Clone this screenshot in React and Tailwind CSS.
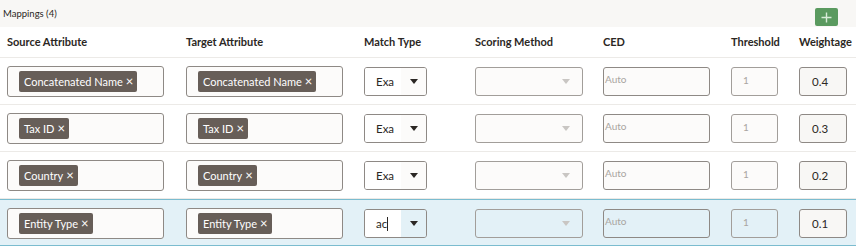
import React from "react";

const rows = [
  { src: "Concatenated Name", tgt: "Concatenated Name", match: "Exa", w: "0.4" },
  { src: "Tax ID", tgt: "Tax ID", match: "Exa", w: "0.3" },
  { src: "Country", tgt: "Country", match: "Exa", w: "0.2" },
  { src: "Entity Type", tgt: "Entity Type", match: "ac", w: "0.1", active: true },
];

function Chip({ label }) {
  return (
    <span className="inline-flex items-center h-[21px] pl-[5px] pr-[4px] rounded-[2px] bg-[#675e58] text-white text-[11px] leading-none whitespace-nowrap">
      {label}
      <span className="ml-[3px] text-[13px]">×</span>
    </span>
  );
}

function Caret({ light }) {
  return (
    <svg width="8" height="5" viewBox="0 0 8 5" className="block">
      <path d="M0 0 L8 0 L4 5 Z" fill={light ? "#c9c6c3" : "#2b2724"} />
    </svg>
  );
}

function Row({ r }) {
  const boxBg = r.active ? "bg-transparent" : "bg-[#fcfbfa]";
  return (
    <div
      className={
        "flex items-start h-[47px] pl-[7px] " +
        (r.active
          ? "bg-[#e3f1f7] border-y border-[#7bbccf]"
          : "border-b border-[#eceae7]")
      }
    >
      <div className="w-[179px] shrink-0 pt-[8px]">
        <div className="w-[157px] h-[31px] rounded-[3px] border border-[#8e8985] bg-[#fcfbfa] flex items-center pl-[11px]">
          <Chip label={r.src} />
        </div>
      </div>
      <div className="w-[178px] shrink-0 pt-[8px]">
        <div className="w-[157px] h-[31px] rounded-[3px] border border-[#8e8985] bg-[#fcfbfa] flex items-center pl-[11px]">
          <Chip label={r.tgt} />
        </div>
      </div>
      <div className="w-[111px] shrink-0 pt-[9px]">
        <div className="w-[63px] h-[29px] rounded-[3px] border border-[#8e8985] flex overflow-hidden">
          <div className="w-[36px] bg-white flex items-center pl-[11px] text-[11.5px] text-[#2b2724] whitespace-nowrap">
            {r.match}
            {r.active && <span className="inline-block w-[1px] h-[14px] bg-[#2b2724]" />}
          </div>
          <div className={"flex-1 flex items-center justify-center " + (r.active ? "bg-[#e3f1f7]" : "bg-[#fcfbfa]")}>
            <Caret />
          </div>
        </div>
      </div>
      <div className="w-[128px] shrink-0 pt-[9px]">
        <div className={"w-[108px] h-[29px] rounded-[3px] border border-[#a29e9a] flex items-center justify-end pr-[12px] " + boxBg}>
          <Caret light />
        </div>
      </div>
      <div className="w-[128px] shrink-0 pt-[9px]">
        <div className={"w-[107px] h-[29px] rounded-[3px] border border-[#8e8985] flex items-start pt-[4px] pl-[1px] text-[10px] text-[#a9a5a1] " + boxBg}>
          Auto
        </div>
      </div>
      <div className="w-[68px] shrink-0 pt-[9px]">
        <div className={"w-[47px] h-[29px] rounded-[3px] border border-[#a29e9a] flex items-start pt-[5px] pl-[11px] text-[10px] text-[#a9a5a1] " + boxBg}>
          1
        </div>
      </div>
      <div className="w-[48px] shrink-0 pt-[9px]">
        <div className="w-[48px] h-[29px] rounded-[3px] border border-[#8e8985] bg-[#f8f7f5] flex items-center pl-[12px] text-[11.5px] text-[#2b2724]">
          {r.w}
        </div>
      </div>
    </div>
  );
}

export default function App() {
  return (
    <div
      className="w-[856px] h-[247px] bg-white overflow-hidden text-[#2b2724]"
      style={{ fontFamily: "Lato, 'Noto Sans', sans-serif" }}
    >
      <div className="h-[27px] bg-[#f8f7f5] flex items-start justify-between pl-[3px] pr-[18px]">
        <div className="text-[9.5px] pt-[7px] text-[#2b2724]">Mappings (4)</div>
        <button className="mt-[8px] w-[23px] h-[18px] rounded-[2px] bg-[#5a9a5f] flex items-center justify-center">
          <svg width="11" height="11" viewBox="0 0 11 11">
            <path d="M5.5 0.5 V10.5 M0.5 5.5 H10.5" stroke="#d8ecd8" strokeWidth="1.4" />
          </svg>
        </button>
      </div>
      <div className="h-[31px] flex items-center pl-[7px] border-b border-[#eceae7] text-[11px] font-bold text-[#2b2724]">
        <div className="w-[179px] shrink-0">Source Attribute</div>
        <div className="w-[178px] shrink-0">Target Attribute</div>
        <div className="w-[111px] shrink-0">Match Type</div>
        <div className="w-[128px] shrink-0">Scoring Method</div>
        <div className="w-[128px] shrink-0">CED</div>
        <div className="w-[68px] shrink-0">Threshold</div>
        <div className="w-[56px] shrink-0">Weightage</div>
      </div>
      {rows.map((r, i) => (
        <Row key={i} r={r} />
      ))}
    </div>
  );
}
